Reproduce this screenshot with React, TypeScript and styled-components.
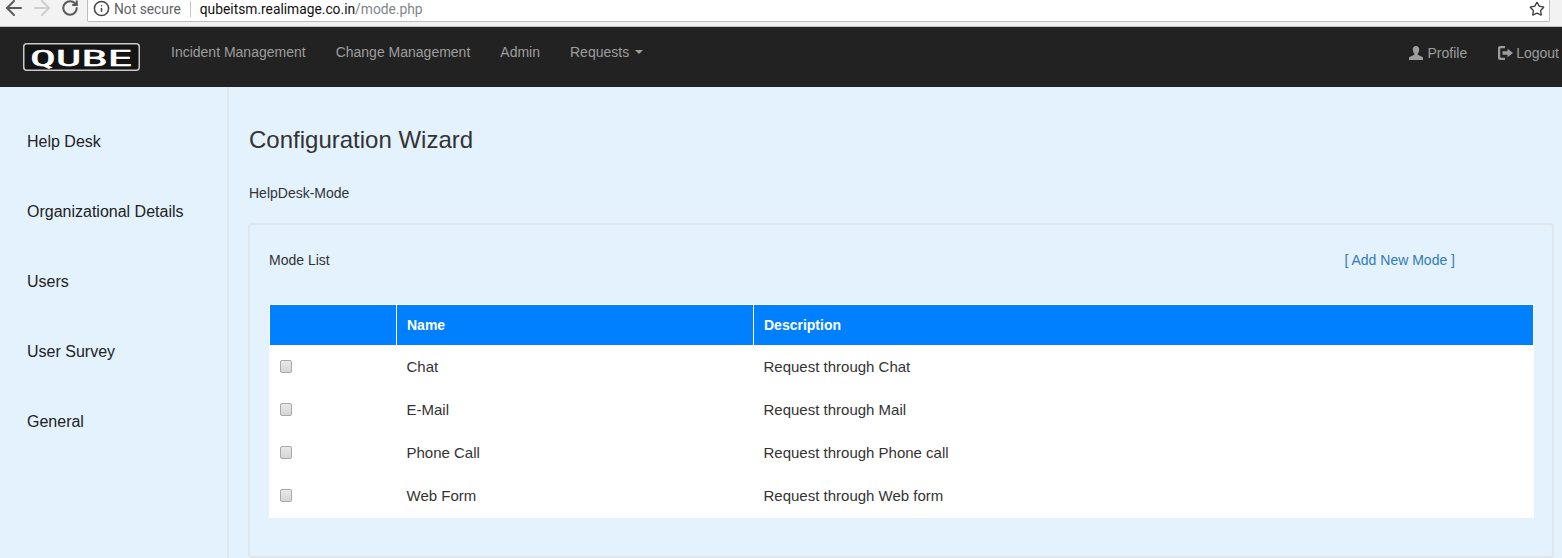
import React from "react";
import styled, { createGlobalStyle } from "styled-components";
import { ArrowLeft, ArrowRight, RotateCw, Info, Star } from "lucide-react";

const Global = createGlobalStyle`
  html, body { margin: 0; padding: 0; height: 558px; overflow: hidden; background: #e3f2fd; }
  body { font-family: "Liberation Sans", Arial, sans-serif; font-size: 14px; color: #333; }
  * { box-sizing: border-box; }
`;

const Page = styled.div`
  width: 1562px;
  height: 558px;
  display: flex;
  flex-direction: column;
  overflow: hidden;
`;

const BrowserBar = styled.div`
  height: 27px;
  flex: none;
  background: #f2f2f2;
  border-bottom: 1px solid #c4c4c4;
  display: flex;
  align-items: flex-start;
  padding-right: 12px;
`;

const NavButton = styled.span<{ $faded?: boolean }>`
  width: 28px;
  height: 16px;
  flex: none;
  display: flex;
  align-items: center;
  justify-content: center;
  color: ${(p) => (p.$faded ? "#cfcfcf" : "#5a5a5a")};
`;

const BrowserButtons = styled.div`
  width: 87px;
  height: 16px;
  flex: none;
  display: flex;
`;

const Omnibox = styled.div`
  flex: 1;
  height: 22px;
  background: #fff;
  border: 1px solid #bdbdbd;
  border-top: none;
  border-radius: 0 0 2px 2px;
  display: flex;
  align-items: center;
  padding: 0 3px 4px 6px;
  font-family: "Roboto", "Liberation Sans", sans-serif;
  font-size: 13.8px;
  color: #5f6368;
`;

const Security = styled.span`
  display: flex;
  align-items: center;
  gap: 4.5px;
  padding-right: 9px;
  margin-right: 9px;
  border-right: 1px solid #c4c4c4;
  height: 16px;
`;

const InfoSlot = styled.span`
  display: flex;
  margin-left: -1.5px;
  color: #444;
`;

const Host = styled.span`
  color: #111;
`;

const Path = styled.span`
  color: #80868b;
`;

const StarSlot = styled.span`
  margin-left: auto;
  margin-right: 1px;
  display: flex;
  color: #3c3c3c;
`;

const NavBar = styled.nav`
  height: 60px;
  flex: none;
  background: #222;
  display: flex;
  align-items: flex-start;
  color: #9d9d9d;
`;

const Brand = styled.div`
  width: 156px;
  flex: none;
  padding: 16px 0 0 23px;
  display: flex;
`;

const LogoBox = styled.svg`
  width: 117px;
  height: 28px;
  display: block;
`;

const NavLink = styled.a<{ $top?: number }>`
  display: flex;
  align-items: center;
  gap: 3px;
  padding: ${(p) => p.$top ?? 15}px 15px 15px;
  line-height: 20px;
  font-size: 14px;
  color: #9d9d9d;
  white-space: nowrap;
`;

const Caret = styled.span`
  display: inline-block;
  width: 0;
  height: 0;
  margin-left: 3px;
  border-top: 4px solid #9d9d9d;
  border-left: 4px solid transparent;
  border-right: 4px solid transparent;
`;

const RightNav = styled.div`
  margin-left: auto;
  display: flex;
  gap: 1px;
  margin-right: -12px;
`;

const UserGlyph = styled.svg`
  width: 14px;
  height: 14px;
  margin-right: 1px;
  fill: #9d9d9d;
`;

const LogoutGlyph = styled.svg`
  width: 15px;
  height: 14px;
  fill: #9d9d9d;
`;

const Body = styled.div`
  flex: 1;
  display: flex;
  min-height: 0;
`;

const Sidebar = styled.aside`
  width: 229px;
  flex: none;
  border-right: 2px solid #dfe6ec;
  padding-top: 20px;
`;

const SideItem = styled.div`
  height: 70px;
  padding-left: 27px;
  display: flex;
  align-items: center;
  font-size: 16px;
  color: #222;
`;

const Main = styled.main`
  flex: 1;
  padding: 0 8px 0 19px;
  min-width: 0;
`;

const Title = styled.h1`
  margin: 0;
  padding: 39px 0 0 1px;
  height: 88px;
  font-size: 24px;
  line-height: 28px;
  font-weight: 400;
  color: #333;
`;

const Crumb = styled.div`
  height: 48px;
  padding: 8px 0 0 1px;
  line-height: 20px;
  font-size: 14px;
`;

const Panel = styled.section`
  height: 335px;
  border: 2px solid #dfe6ec;
  border-radius: 4px;
  padding: 0 18px;
`;

const PanelHead = styled.div`
  height: 79px;
  display: flex;
  justify-content: space-between;
  padding: 25px 79px 0 1px;
  line-height: 20px;
`;

const AddLink = styled.a`
  color: #337ab7;
`;

const Table = styled.table`
  width: 1265px;
  margin-left: 1px;
  border-collapse: collapse;
  table-layout: fixed;
  background: #fff;
`;

const HeadCell = styled.th<{ $w?: number }>`
  width: ${(p) => (p.$w ? `${p.$w}px` : "auto")};
  height: 41px;
  background: #007fff;
  border: 1px solid #fff;
  color: #fff;
  font-weight: 700;
  text-align: left;
  padding: 0 10px;
`;

const Cell = styled.td`
  height: 43px;
  padding: 0 10px 1px;
  vertical-align: middle;
  color: #333;
  font-size: 15px;
`;

const Check = styled.input`
  appearance: none;
  display: block;
  width: 12px;
  height: 13px;
  margin: 0 0 1px 0;
  border: 1px solid #a9a9a9;
  border-radius: 2px;
  background: linear-gradient(#e8e8e8, #d6d6d6);
`;

const UserIcon = () => (
  <UserGlyph viewBox="0 0 14 14">
    <path d="M7 0C5 0 3.8 1.4 3.8 3.6c0 1.5.5 2.9 1.4 3.8v1.3L.6 11C.2 11.3 0 11.7 0 12.2V14h14v-1.8c0-.5-.2-.9-.6-1.2L8.800 8.700V7.400c.9-.9 1.400-2.300 1.400-3.800C10.200 1.400 9 0 7 0z" />
  </UserGlyph>
);

const LogoutIcon = () => (
  <LogoutGlyph viewBox="0 0 15 14">
    <path d="M2 0h5v2.200H3c-.5 0-.8.300-.8.800v8c0 .5.300.8.800.8h4V14H2c-1.100 0-2-.9-2-2V2C0 .9.900 0 2 0z" />
    <path d="M9.500 2.800L15 7l-5.500 4.200V8.800H4.500V5.200h5z" />
  </LogoutGlyph>
);

const rows = [
  ["Chat", "Request through Chat"],
  ["E-Mail", "Request through Mail"],
  ["Phone Call", "Request through Phone call"],
  ["Web Form", "Request through Web form"],
];

export default function App() {
  return (
    <Page>
      <Global />
      <BrowserBar>
        <BrowserButtons>
          <NavButton><ArrowLeft size={24} strokeWidth={2} /></NavButton>
          <NavButton $faded><ArrowRight size={24} strokeWidth={2} /></NavButton>
          <NavButton><RotateCw size={18} strokeWidth={2.7} /></NavButton>
        </BrowserButtons>
        <Omnibox>
          <Security>
            <InfoSlot><Info size={17} strokeWidth={2.1} /></InfoSlot>
            Not secure
          </Security>
          <Host>qubeitsm.realimage.co.in</Host>
          <Path>/mode.php</Path>
          <StarSlot><Star size={16} strokeWidth={2} /></StarSlot>
        </Omnibox>
      </BrowserBar>
      <NavBar>
        <Brand>
          <LogoBox viewBox="0 0 117 28">
            <rect x="0.75" y="0.75" width="115.5" height="26.5" rx="3" fill="#141414" stroke="#c8c8c8" strokeWidth="1.5" />
            <text
              x="7"
              y="22.500"
              textLength="103"
              lengthAdjust="spacingAndGlyphs"
              fontFamily="'DejaVu Sans Mono', monospace"
              fontWeight="400"
              fontSize="22"
              fill="#fff"
              stroke="#fff"
              strokeWidth="0.5"
            >
              QUBE
            </text>
          </LogoBox>
        </Brand>
        <NavLink>Incident Management</NavLink>
        <NavLink>Change Management</NavLink>
        <NavLink>Admin</NavLink>
        <NavLink>Requests <Caret /></NavLink>
        <RightNav>
          <NavLink $top={16}><UserIcon />Profile</NavLink>
          <NavLink><LogoutIcon />Logout</NavLink>
        </RightNav>
      </NavBar>
      <Body>
        <Sidebar>
          {["Help Desk", "Organizational Details", "Users", "User Survey", "General"].map((s) => (
            <SideItem key={s}>{s}</SideItem>
          ))}
        </Sidebar>
        <Main>
          <Title>Configuration Wizard</Title>
          <Crumb>HelpDesk-Mode</Crumb>
          <Panel>
            <PanelHead>
              <span>Mode List</span>
              <AddLink>[ Add New Mode ]</AddLink>
            </PanelHead>
            <Table>
              <thead>
                <tr>
                  <HeadCell $w={127} />
                  <HeadCell $w={357}>Name</HeadCell>
                  <HeadCell>Description</HeadCell>
                </tr>
              </thead>
              <tbody>
                {rows.map(([name, desc]) => (
                  <tr key={name}>
                    <Cell><Check type="checkbox" /></Cell>
                    <Cell>{name}</Cell>
                    <Cell>{desc}</Cell>
                  </tr>
                ))}
              </tbody>
            </Table>
          </Panel>
        </Main>
      </Body>
    </Page>
  );
}
